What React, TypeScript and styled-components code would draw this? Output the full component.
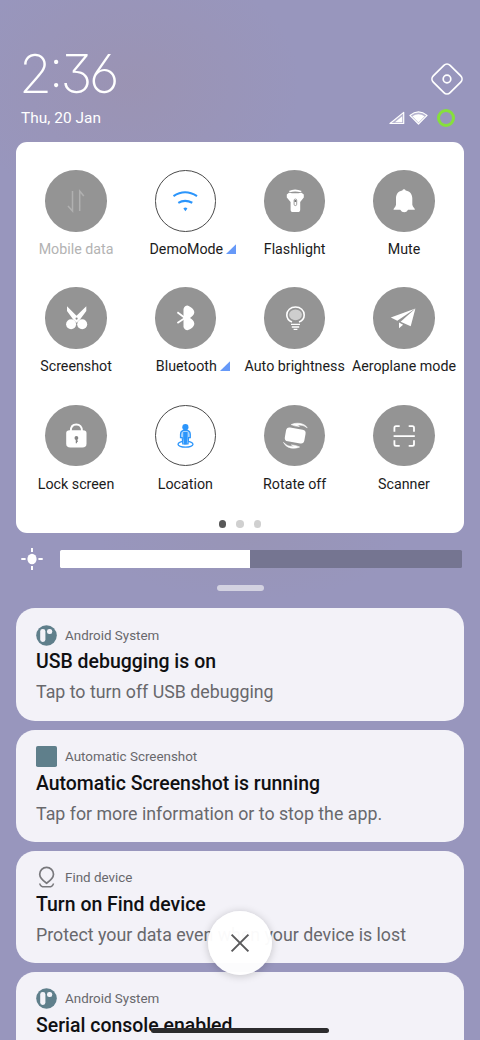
import React from 'react';
import styled, { createGlobalStyle, css } from 'styled-components';

const GlobalStyle = createGlobalStyle`
  *, *::before, *::after { box-sizing: border-box; }
  html, body { margin: 0; padding: 0; }
  body { font-family: Roboto, "Liberation Sans", sans-serif; overflow: hidden; }
  svg { display: block; overflow: visible; }
`;

const Screen = styled.main`
  position: relative;
  width: 480px;
  height: 1040px;
  overflow: hidden;
  display: flex;
  flex-direction: column;
  padding: 0 16px;
  background:
    radial-gradient(ellipse 170px 130px at 130px 85px, rgba(156, 146, 174, 0.65), rgba(156, 146, 174, 0)),
    radial-gradient(ellipse 150px 60px at 250px 540px, rgba(152, 148, 178, 0.6), rgba(152, 148, 178, 0)),
    #9896bd;
`;

const Header = styled.header`
  display: flex;
  justify-content: space-between;
  flex: none;
  height: 142px;
  padding: 48px 0 0 5px;
  color: #fff;
`;

const ClockColumn = styled.div`
  display: flex;
  flex-direction: column;
`;

const Clock = styled.div`
  display: flex;
  height: 52px;
  margin-left: -2px;
  font-family: Inter, sans-serif;
  font-weight: 250;
  font-size: 53.5px;
  line-height: 52px;
  letter-spacing: -3.2px;
  white-space: nowrap;
  font-feature-settings: "cv03", "cv09", "case";
`;

const DateText = styled.div`
  margin-top: 8px;
  font-size: 15.4px;
  line-height: 20px;
  letter-spacing: 0.05px;
  white-space: nowrap;
`;

const HeaderSide = styled.div`
  display: flex;
  flex-direction: column;
  align-items: flex-end;
  padding-top: 13.5px;
`;

const StatusIcons = styled.div`
  display: flex;
  align-items: center;
  height: 20px;
  margin-top: 12px;
  padding-right: 9.5px;
`;

const QuickPanel = styled.section`
  flex: none;
  height: 391px;
  padding: 28px 5.4px 0;
  border-radius: 11px;
  background: #fff;
`;

const TileGrid = styled.div`
  display: grid;
  grid-template-columns: repeat(4, 1fr);
  grid-auto-rows: 117.4px;
`;

const Tile = styled.div`
  display: flex;
  flex-direction: column;
  align-items: center;
`;

const TileButton = styled.div<{ $active?: boolean }>`
  display: flex;
  align-items: center;
  justify-content: center;
  flex: none;
  width: 61.5px;
  height: 61.5px;
  border-radius: 50%;
  color: #fff;
  background: #949494;
  ${(p) =>
    p.$active &&
    css`
      color: #2b95fb;
      background: #fff;
      border: 1.3px solid #4a4a4a;
    `}
`;

const TileLabel = styled.div<{ $disabled?: boolean; $expandable?: boolean }>`
  position: relative;
  margin-top: 7.5px;
  padding-left: ${(p) => (p.$expandable ? '2px' : '0')};
  font-size: 14.25px;
  line-height: 20px;
  white-space: nowrap;
  color: ${(p) => (p.$disabled ? '#b3b3b3' : '#1c1c1c')};
`;

const ExpandMark = styled.svg`
  position: absolute;
  left: calc(100% + 3px);
  top: 5px;
`;

const Pager = styled.div`
  display: flex;
  justify-content: center;
  gap: 10px;
  margin-top: -2px;
`;

const PageDot = styled.span<{ $current?: boolean }>`
  width: 7.5px;
  height: 7.5px;
  border-radius: 50%;
  background: ${(p) => (p.$current ? '#585858' : '#d0d0d0')};
`;

const BrightnessRow = styled.div`
  display: flex;
  align-items: center;
  flex: none;
  height: 52px;
  padding: 0 2px 1px 5px;
  gap: 17px;
`;

const BrightnessTrack = styled.div`
  flex: 1;
  height: 18px;
  border-radius: 1.5px;
  background: #757591;
`;

const BrightnessFill = styled.div`
  width: 190px;
  height: 100%;
  border-radius: 1.5px 0 0 1.5px;
  background: #fff;
`;

const Handle = styled.div`
  flex: none;
  align-self: center;
  width: 47px;
  height: 6px;
  border-radius: 3px;
  background: #d3d2e1;
`;

const NotificationList = styled.section`
  display: flex;
  flex-direction: column;
  gap: 9px;
  margin-top: 17.4px;
`;

const NotificationCard = styled.article`
  flex: none;
  height: 112.3px;
  padding: 15.7px 20px 0;
  border-radius: 19px;
  background: #f3f2f8;
`;

const AppLine = styled.div`
  display: flex;
  align-items: center;
  gap: 8px;
  height: 22px;
  font-size: 13.4px;
  color: #68686c;
`;

const Title = styled.h2`
  margin: 4.4px 0 0;
  font-size: 19.45px;
  font-weight: 500;
  line-height: 24px;
  letter-spacing: 0;
  white-space: nowrap;
  color: #101012;
`;

const Message = styled.p`
  margin: 5.8px 0 0;
  font-size: 17.8px;
  line-height: 24px;
  white-space: nowrap;
  color: #68686c;
`;

const ClearButton = styled.div`
  position: absolute;
  left: 208px;
  top: 911px;
  display: flex;
  align-items: center;
  justify-content: center;
  width: 64px;
  height: 64px;
  border-radius: 50%;
  background: rgba(255, 255, 255, 0.97);
  box-shadow: 0 1px 9px rgba(0, 0, 0, 0.2);
`;

const HomeIndicator = styled.div`
  position: absolute;
  left: 151px;
  top: 1028px;
  width: 177.5px;
  height: 4.5px;
  border-radius: 3px;
  background: #2c2c2e;
`;

const Glyph = ({ children }: { children: React.ReactNode }) => (
  <svg width="30" height="30" viewBox="-15 -15 30 30" fill="none">
    {children}
  </svg>
);

const DataIcon = () => (
  <Glyph>
    <path d="M-3.5-10V10L-8 5M3.7 10V-10L7.8-5" stroke="#b0b0b0" strokeWidth="1.5" />
  </Glyph>
);

const WifiTileIcon = () => (
  <Glyph>
    <path d="M-11.5-4.8Q0-12.6 12-4.8M-6.7 1.8Q0-2 7.3 1.8" stroke="currentColor" strokeWidth="2.1" />
    <path d="M-1.6 7.4Q.4 5.8 2.4 7.4L.4 10.2Z" fill="currentColor" />
  </Glyph>
);

const FlashlightIcon = () => (
  <Glyph>
    <path d="M-6.2-10Q0-13 6.7-10L5.6-8.8Q0-10-5-8.8Z" fill="currentColor" />
    <path d="M-6-8.2Q0-7.2 6.5-8.2L8.8-6.4V-3.4L5.2 1V8.4Q5.2 11 2.8 11H-2Q-4.4 11-4.4 8.4V1L-8.2-3.4V-6.4Z" fill="currentColor" />
    <rect x="-.9" y="-2" width="2.6" height="6.6" rx="1.3" stroke="#888" strokeWidth=".8" />
    <path d="M-.5 1V-1H1.3V1Z" fill="#777" />
  </Glyph>
);

const BellIcon = () => (
  <Glyph>
    <path
      d="M0-11.8Q1.2-11.8 1.7-10.6C6.3-9.7 8.3-6.6 8.3-2.7V3.7Q8.4 5 10.8 8V8.8H4.1Q2.6 11.3.2 11.3T-3.8 8.8H-10.4V8Q-8 5-8 3.7V-2.7C-8-6.6-6.2-9.7-1.7-10.6Q-1.2-11.8 0-11.8Z"
      fill="currentColor"
    />
  </Glyph>
);

const ScissorsIcon = () => (
  <Glyph>
    <path d="M-9-11.7L.5-2.3 10.3-11.7V-7L4 1.5.6 4.7-2.8 1.5-9-7Z" fill="currentColor" />
    <circle cx="-4.9" cy="6.3" r="5" fill="currentColor" />
    <circle cx="6.2" cy="6.3" r="5" fill="currentColor" />
    <circle cx=".6" cy=".6" r="1.1" fill="#8c8c8c" />
  </Glyph>
);

const BluetoothIcon = () => (
  <Glyph>
    <path d="M-7.6-5.8L0 0-7.6 5" stroke="currentColor" strokeWidth="1.8" />
    <path d="M-1.5-9Q-.6-12.2 2.4-12.4C6-11 9.3-8.5 9.3-5.5 9.3-3 6.4-1.2 5 0 7 1.3 9.3 3 9.3 5.5 9.3 8.7 6 11.2 2.4 12.3Q-.6 12-1.5 9Z" fill="currentColor" />
  </Glyph>
);

const BulbIcon = () => (
  <Glyph>
    <path d="M-3 4.1C-6.2 2.7-8.2.1-8.2-3-8.2-7.7-4.4-11 .5-11S9.2-7.7 9.2-3C9.2.1 7.3 2.7 4 4.1" stroke="currentColor" strokeWidth="1.6" />
    <ellipse cx=".5" cy="-3.2" rx="6.4" ry="5.4" fill="#cecece" />
    <path d="M-4 6.4H5M-3.2 9H4.2M-1.4 11.4H2.4" stroke="currentColor" strokeWidth="1.4" />
  </Glyph>
);

const PlaneIcon = () => (
  <Glyph>
    <path d="M11.4-9.4L-13.2-.6-6.7 2.7Z" fill="currentColor" />
    <path d="M11.4-9.4L-3.4 3.7 6.7 8.3Z" fill="currentColor" />
    <path d="M-5 4.4L-.9 6.7-5 10.2Z" fill="currentColor" />
  </Glyph>
);

const LockIcon = () => (
  <Glyph>
    <path d="M-5.2-5C-5.2-9.2-3.2-11.5.3-11.5S6-9.2 6-5" stroke="currentColor" strokeWidth="1.9" />
    <path d="M-6.4-5.7H7Q10.5-5.5 10.5-3V7.8Q10.5 11.6 6.4 11.6H-5.7Q-9.8 11.6-9.8 7.8V-3Q-9.8-5.5-6.4-5.7Z" fill="currentColor" />
    <circle cx=".4" cy="2" r="1.9" fill="#858585" />
    <path d="M.4 2V7.3M.8 5.2H2" stroke="#858585" strokeWidth="1.3" />
  </Glyph>
);

const LocationIcon = () => (
  <Glyph>
    <ellipse cx=".5" cy="8.2" rx="7.5" ry="3" stroke="currentColor" strokeWidth="1.3" />
    <circle cx=".4" cy="-8.8" r="3.1" fill="currentColor" />
    <path d="M-1.8-5.6H2.6Q5.2-4.7 5.3-1.8V1.7H3.6L3 8H1.2L.6 5 0 8H-2.2L-2.8 1.7H-4.5V-1.8Q-4.4-4.7-1.8-5.6Z" stroke="currentColor" strokeWidth="1.2" fill="#a9d4fd" />
    <path d="M-1.8-4H2.6V2.6L1.5 8.4H-.8L-1.8 2.6Z" fill="currentColor" />
  </Glyph>
);

const RotateIcon = () => (
  <Glyph>
    <rect x="-9.8" y="-7.5" width="19.8" height="14" rx="3.6" transform="rotate(10)" fill="currentColor" />
    <path d="M-3.8-11.4C2-14 9.3-12.9 12.2-8.2 8.5-11 6-11.2 2-10.9L4.4-9.6Q-.5-9.6-3.8-11.4Z" fill="currentColor" stroke="currentColor" strokeWidth=".6" />
    <path d="M4.6 11C-1.2 13.4-8.8 12.3-11.4 6.4-8.2 10-5 10.6-1 10.4L-3.6 8.9Q.9 9.1 4.6 11Z" fill="currentColor" stroke="currentColor" strokeWidth=".6" />
  </Glyph>
);

const ScanIcon = () => (
  <Glyph>
    <path d="M-9.6-4.2V-8.2Q-9.6-9.8-8-9.8H-4.3M4.7-9.8H8.4Q10-9.8 10-8.2V-4.2M10 4.2V8.2Q10 9.8 8.4 9.8H4.7M-4.3 9.8H-8Q-9.6 9.8-9.6 8.2V4.2M-10.4.1H10.8" stroke="currentColor" strokeWidth="1.8" />
  </Glyph>
);

const SettingsIcon = () => (
  <svg width="34" height="34" viewBox="-17 -17 34 34" fill="none" stroke="#fff" strokeWidth="1.7">
    <rect x="-11.9" y="-11.9" width="23.8" height="23.8" rx="4.4" transform="rotate(45)" />
    <circle cx="0" cy="0" r="3.8" />
  </svg>
);

const SignalIcon = () => (
  <svg width="16" height="14" viewBox="0 0 16 14">
    <path d="M1 12.5L14.7 1.4V12.5Z" fill="rgba(255,255,255,.3)" stroke="#fff" strokeWidth="1.2" strokeLinejoin="round" />
    <path d="M6 11.2L13.2 5.2V11.2Z" fill="#fff" />
  </svg>
);

const WifiStatusIcon = () => (
  <svg width="19" height="14" viewBox="0 0 19 14">
    <path d="M9.5 13L.9 4.4Q9.5-2.7 18.1 4.4Z" fill="rgba(255,255,255,.3)" stroke="#fff" strokeWidth="1.2" strokeLinejoin="round" />
    <path d="M9.5 11.6L3.4 5.2Q9.5 1.2 15.6 5.2Z" fill="#fff" />
  </svg>
);

const BatteryRing = styled.span`
  width: 18px;
  height: 18px;
  margin-left: 9px;
  border: 3px solid #86e03c;
  border-radius: 50%;
`;

const SignalSlot = styled.span`
  margin-right: 4px;
`;

const SunIcon = () => (
  <svg width="22" height="22" viewBox="-11 -11 22 22" fill="none">
    <ellipse cx="0" cy="0" rx="4.6" ry="5.2" fill="#fff" />
    <path d="M0-11V-7M0 7V11M-10.7 0H-6.4M6.4 0H10.7" stroke="#fff" strokeWidth="2" />
  </svg>
);

const AndroidIcon = () => (
  <svg width="21" height="21" viewBox="0 0 21 21">
    <circle cx="10.5" cy="10.5" r="10.3" fill="#5f7f8b" />
    <rect x="4.2" y="4" width="5.2" height="13" rx="2.4" fill="#f3f2f8" />
    <path d="M11 6.2Q11 4 13.3 4H14.2Q16.3 4 16.3 6.5T14 9H13.2Q11 9 11 7Z" fill="#f3f2f8" />
  </svg>
);

const SquareIcon = () => (
  <svg width="21" height="21" viewBox="0 0 21 21">
    <rect width="21" height="21" rx="1.8" fill="#5f7f8b" />
  </svg>
);

const FindIcon = () => (
  <svg width="21" height="21" viewBox="0 0 21 21" fill="none" stroke="#78787c" strokeWidth="1.7">
    <path d="M10.6 16.3C6.2 13.2 3.7 10.8 3.7 7.3A6.9 6.9 0 0 1 17.5 7.3C17.5 10.8 15 13.2 10.6 16.3Z" />
    <path d="M3.6 16.4Q4.8 19.8 8 19.8H13.2Q16.4 19.8 17.6 16.4" strokeWidth="1.4" />
  </svg>
);

type TileData = { label: string; icon: React.ReactNode; active?: boolean; disabled?: boolean; expandable?: boolean };

const tiles: TileData[] = [
  { label: 'Mobile data', icon: <DataIcon />, disabled: true },
  { label: 'DemoMode', icon: <WifiTileIcon />, active: true, expandable: true },
  { label: 'Flashlight', icon: <FlashlightIcon /> },
  { label: 'Mute', icon: <BellIcon /> },
  { label: 'Screenshot', icon: <ScissorsIcon /> },
  { label: 'Bluetooth', icon: <BluetoothIcon />, expandable: true },
  { label: 'Auto brightness', icon: <BulbIcon /> },
  { label: 'Aeroplane mode', icon: <PlaneIcon /> },
  { label: 'Lock screen', icon: <LockIcon /> },
  { label: 'Location', icon: <LocationIcon />, active: true },
  { label: 'Rotate off', icon: <RotateIcon /> },
  { label: 'Scanner', icon: <ScanIcon /> },
];

const notifications = [
  { app: 'Android System', icon: <AndroidIcon />, title: 'USB debugging is on', message: 'Tap to turn off USB debugging' },
  { app: 'Automatic Screenshot', icon: <SquareIcon />, title: 'Automatic Screenshot is running', message: 'Tap for more information or to stop the app.' },
  { app: 'Find device', icon: <FindIcon />, title: 'Turn on Find device', message: 'Protect your data even when your device is lost' },
  { app: 'Android System', icon: <AndroidIcon />, title: 'Serial console enabled', message: '' },
];

export default function App() {
  return (
    <>
      <GlobalStyle />
      <Screen>
        <Header>
          <ClockColumn>
            <Clock>2:36</Clock>
            <DateText>Thu, 20 Jan</DateText>
          </ClockColumn>
          <HeaderSide>
            <SettingsIcon />
            <StatusIcons>
              <SignalSlot>
                <SignalIcon />
              </SignalSlot>
              <WifiStatusIcon />
              <BatteryRing />
            </StatusIcons>
          </HeaderSide>
        </Header>
        <QuickPanel>
          <TileGrid>
            {tiles.map((t) => (
              <Tile key={t.label}>
                <TileButton $active={t.active}>{t.icon}</TileButton>
                <TileLabel $disabled={t.disabled} $expandable={t.expandable}>
                  {t.label}
                  {t.expandable && (
                    <ExpandMark width="10" height="10" viewBox="0 0 10 10">
                      <path d="M0 10L10 .3V10Z" fill="#6699f8" />
                    </ExpandMark>
                  )}
                </TileLabel>
              </Tile>
            ))}
          </TileGrid>
          <Pager>
            <PageDot $current />
            <PageDot />
            <PageDot />
          </Pager>
        </QuickPanel>
        <BrightnessRow>
          <SunIcon />
          <BrightnessTrack>
            <BrightnessFill />
          </BrightnessTrack>
        </BrightnessRow>
        <Handle />
        <NotificationList>
          {notifications.map((n) => (
            <NotificationCard key={n.title}>
              <AppLine>
                {n.icon}
                {n.app}
              </AppLine>
              <Title>{n.title}</Title>
              {n.message && <Message>{n.message}</Message>}
            </NotificationCard>
          ))}
        </NotificationList>
        <ClearButton>
          <svg width="18" height="18" viewBox="0 0 18 18" fill="none" stroke="#5a5a5c" strokeWidth="2">
            <path d="M.6.6L17.4 17.4M17.4.6L.6 17.4" />
          </svg>
        </ClearButton>
        <HomeIndicator />
      </Screen>
    </>
  );
}
